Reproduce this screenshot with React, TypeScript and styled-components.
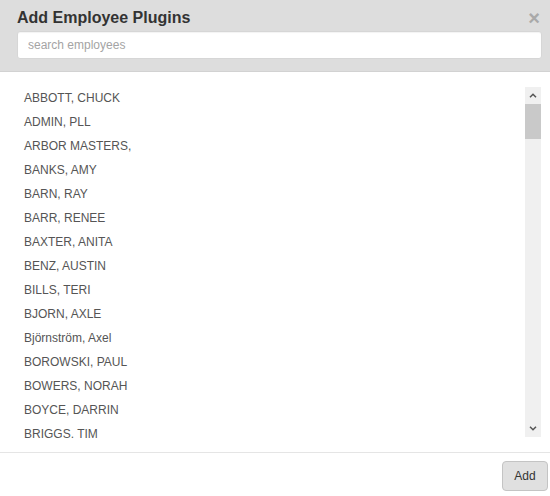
import styled, { createGlobalStyle } from "styled-components";

const GlobalStyle = createGlobalStyle`
  html, body {
    margin: 0;
    padding: 0;
    background: #fff;
  }
  body {
    font-family: "Liberation Sans", Arial, sans-serif;
  }
`;

const Modal = styled.div`
  width: 550px;
  height: 496px;
  display: flex;
  flex-direction: column;
  background: #fff;
  overflow: hidden;
`;
const Header = styled.div`
  background-color: #dddddd;
  border-bottom: 1px solid #d2d2d2;
  padding: 8px 8px 12px 17px;
  height: 51px;
`;
const TitleRow = styled.div`
  display: flex;
  align-items: center;
  justify-content: space-between;
  height: 20px;
`;
const Title = styled.h3`
  margin: 0;
  font-size: 16px;
  line-height: 20px;
  font-weight: 700;
  color: #333;
`;
const CloseBtn = styled.button`
  border: none;
  background: transparent;
  padding: 0;
  margin: 0 2px 0 0;
  color: #a9a9a9;
  font-family: "Liberation Sans", Arial, sans-serif;
  font-size: 20px;
  font-weight: 700;
  line-height: 20px;
  cursor: pointer;
`;
const Search = styled.input`
  display: block;
  box-sizing: border-box;
  width: 100%;
  height: 28px;
  margin-top: 3px;
  padding: 0 10px;
  border: 1px solid #d6d6d6;
  border-radius: 3px;
  background: #fff;
  box-shadow: inset 0 1px 1px rgba(0, 0, 0, 0.05);
  font-family: "Liberation Sans", Arial, sans-serif;
  font-size: 12px;
  color: #555;
  outline: none;
  &::placeholder {
    color: #a4a4a4;
  }
`;
const Body = styled.div`
  padding: 15px 9px 15px 17px;
  border-bottom: 1px solid #e5e5e5;
`;
// the list runs a little past the end of the scrollbar, as in the original
const ListBox = styled.div`
  display: flex;
  align-items: flex-start;
  height: 350px;
`;
const Items = styled.ul`
  flex: 1;
  height: 362px;
  list-style: none;
  margin: -1px 0 0;
  padding: 0 0 0 7px;
  overflow: hidden;
`;
const Item = styled.li`
  height: 24px;
  line-height: 24px;
  font-size: 12px;
  color: #555;
  white-space: nowrap;
`;
const Scrollbar = styled.div`
  width: 16px;
  height: 350px;
  display: flex;
  flex-direction: column;
  background: #f0f0f0;
`;
const Arrow = styled.div`
  height: 17px;
  display: flex;
  align-items: center;
  justify-content: center;
`;
const Track = styled.div`
  flex: 1;
`;
const Thumb = styled.div`
  height: 35px;
  background: #c9c9c9;
`;
const Footer = styled.div`
  flex: 1;
  display: flex;
  justify-content: flex-end;
  align-items: flex-start;
  padding: 8px 2px 0 0;
`;
const Button = styled.button`
  height: 30px;
  width: 46px;
  border: 1px solid #c4c4c4;
  border-radius: 4px;
  background: #e0e0e0;
  color: #333;
  font-family: "Liberation Sans", Arial, sans-serif;
  font-size: 12px;
  cursor: pointer;
`;

const employees = [
  "ABBOTT, CHUCK",
  "ADMIN, PLL",
  "ARBOR MASTERS,",
  "BANKS, AMY",
  "BARN, RAY",
  "BARR, RENEE",
  "BAXTER, ANITA",
  "BENZ, AUSTIN",
  "BILLS, TERI",
  "BJORN, AXLE",
  "Björnström, Axel",
  "BOROWSKI, PAUL",
  "BOWERS, NORAH",
  "BOYCE, DARRIN",
  "BRIGGS. TIM",
];

function Chevron({ up }: { up: boolean }) {
  return (
    <svg width="8" height="5" viewBox="0 0 8 5">
      <path
        d={up ? "M1 4.2 L4 1.2 L7 4.2" : "M1 0.8 L4 3.8 L7 0.8"}
        fill="none"
        stroke="#555"
        strokeWidth="1.5"
      />
    </svg>
  );
}

export default function App() {
  return (
    <Modal>
      <GlobalStyle />
      <Header>
        <TitleRow>
          <Title>Add Employee Plugins</Title>
          <CloseBtn>×</CloseBtn>
        </TitleRow>
        <Search type="text" placeholder="search employees" />
      </Header>
      <Body>
        <ListBox>
          <Items>
            {employees.map((name) => (
              <Item key={name}>{name}</Item>
            ))}
          </Items>
          <Scrollbar>
            <Arrow>
              <Chevron up />
            </Arrow>
            <Track>
              <Thumb />
            </Track>
            <Arrow>
              <Chevron up={false} />
            </Arrow>
          </Scrollbar>
        </ListBox>
      </Body>
      <Footer>
        <Button>Add</Button>
      </Footer>
    </Modal>
  );
}
